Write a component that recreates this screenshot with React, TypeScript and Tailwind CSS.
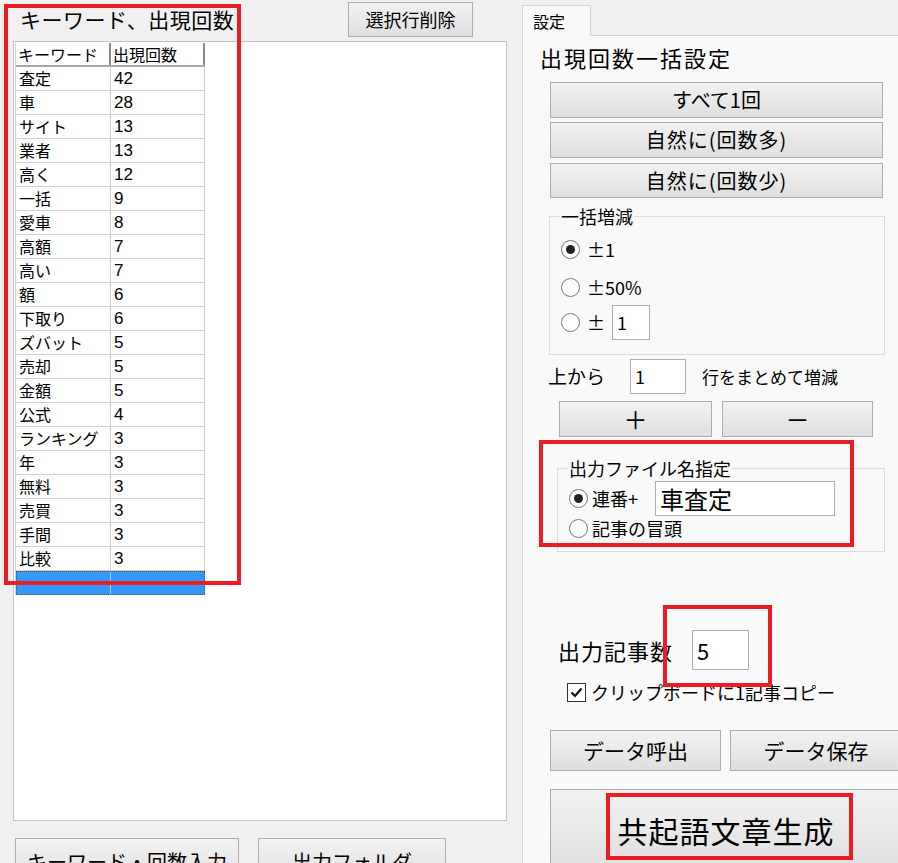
import React from 'react';

const keywords: [string, number][] = [
  ['査定', 42],
  ['車', 28],
  ['サイト', 13],
  ['業者', 13],
  ['高く', 12],
  ['一括', 9],
  ['愛車', 8],
  ['高額', 7],
  ['高い', 7],
  ['額', 6],
  ['下取り', 6],
  ['ズバット', 5],
  ['売却', 5],
  ['金額', 5],
  ['公式', 4],
  ['ランキング', 3],
  ['年', 3],
  ['無料', 3],
  ['売買', 3],
  ['手間', 3],
  ['比較', 3],
];

const btn =
  'flex shrink-0 items-center justify-center border border-[#adadad] bg-linear-to-b from-[#f2f2f2] to-[#dfdfdf] text-black';

const Radio: React.FC<{ checked?: boolean }> = ({ checked }) => (
  <span className="flex h-[19px] w-[19px] shrink-0 items-center justify-center rounded-full border border-[#777] bg-white">
    {checked && <span className="h-[9px] w-[9px] rounded-full bg-[#222]" />}
  </span>
);

const TextBox: React.FC<{ className?: string; text: string; textClass?: string }> = ({ className, text, textClass }) => (
  <div className={`flex shrink-0 items-center border border-[#adadad] bg-white pl-[4px] ${className ?? ''}`}>
    <span className={textClass ?? 'text-[18px]'}>{text}</span>
  </div>
);

const KeywordGrid: React.FC = () => (
  <div className="ml-[1px] mt-[1px] w-[190px] border-l border-[#d0d0d0] text-[16px] leading-[23px]">
    <div className="flex h-[24px] border-b-2 border-[#a8a8a8] bg-white">
      <div className="w-[95px] border-r-2 border-[#8a8a8a] pl-[2px]">キーワード</div>
      <div className="w-[94px] border-r-2 border-[#8a8a8a] pl-[2px]">出現回数</div>
    </div>
    {keywords.map(([word, count]) => (
      <div key={word} className="flex h-[24px] border-b border-[#d0d0d0] bg-white">
        <div className="w-[95px] border-r border-[#d0d0d0] pl-[3px]">{word}</div>
        <div className="w-[94px] border-r border-[#d0d0d0] pl-[3px] font-['Liberation_Sans',sans-serif] text-[17px]">{count}</div>
      </div>
    ))}
    <div className="flex h-[24px] border border-dotted border-[#6b4a10] bg-[#3399ff]">
      <div className="w-[94px] border-r border-[#9fc9f5]" />
      <div className="w-[94px]" />
    </div>
  </div>
);

const LeftPane: React.FC = () => (
  <div className="flex w-[522px] shrink-0 flex-col">
    <div className="flex h-[41px] shrink-0 items-start">
      <div className="w-[348px] pl-[20px] pt-[3px] text-[21px] leading-[32px] tracking-[0.5px]">キーワード、出現回数</div>
      <button className={`${btn} mt-[2px] h-[35px] w-[125px] text-[18px]`}>選択行削除</button>
    </div>
    <div className="ml-[13px] h-[780px] w-[494px] shrink-0 border border-[#c4c4c4] bg-white">
      <KeywordGrid />
    </div>
    <div className="mt-[17px] flex shrink-0">
      <button className={`${btn} ml-[15px] h-[48px] w-[224px] text-[20px]`}>キーワード・回数入力</button>
      <button className={`${btn} ml-[19px] h-[48px] w-[188px] text-[20px]`}>出力フォルダ</button>
    </div>
  </div>
);

const RightPane: React.FC = () => (
  <div className="flex min-w-0 flex-1 flex-col pt-[5px]">
    <div className="z-10 -mb-px flex h-[31px] w-[69px] shrink-0 items-center border border-b-0 border-[#d4d4d4] bg-[#f9f9f9] pl-[10px] text-[16px]">
      設定
    </div>
    <div className="flex flex-1 flex-col border-l border-t border-[#d4d4d4] bg-[#f9f9f9]">
      <div className="ml-[17px] mt-[4px] h-[34px] shrink-0 text-[22px] leading-[34px] tracking-[2px]">出現回数一括設定</div>

      <button className={`${btn} ml-[27px] mt-[8px] h-[36px] w-[333px] text-[20px]`}>すべて1回</button>
      <button className={`${btn} ml-[27px] mt-[4px] h-[36px] w-[333px] text-[20px] tracking-[1px]`}>自然に(回数多)</button>
      <button className={`${btn} ml-[27px] mt-[5px] h-[35px] w-[333px] text-[20px] tracking-[1px]`}>自然に(回数少)</button>

      <fieldset className="ml-[26px] mt-[7px] w-[336px] shrink-0 border border-[#dcdcdc] pb-[14px]">
        <legend className="ml-[10px] px-[1px] text-[18px] leading-[22px]">一括増減</legend>
        <div className="ml-[11px] mt-[10px] flex h-[24px] items-center gap-[7px]">
          <Radio checked />
          <span className="text-[18px]">±1</span>
        </div>
        <div className="ml-[11px] mt-[14px] flex h-[24px] items-center gap-[7px]">
          <Radio />
          <span className="text-[18px]">±50%</span>
        </div>
        <div className="ml-[11px] mt-[6px] flex h-[35px] items-center">
          <Radio />
          <span className="ml-[7px] w-[25px] text-[18px]">±</span>
          <TextBox className="h-[35px] w-[38px]" text="1" />
        </div>
      </fieldset>

      <div className="ml-[25px] mt-[4px] flex h-[35px] shrink-0 items-center">
        <span className="w-[82px] text-[19px]">上から</span>
        <TextBox className="h-[35px] w-[56px]" text="1" />
        <span className="ml-[16px] text-[17px]">行をまとめて増減</span>
      </div>

      <div className="ml-[36px] mt-[7px] flex shrink-0 gap-[10px]">
        <button className={`${btn} h-[36px] w-[153px] text-[24px]`}>＋</button>
        <button className={`${btn} h-[36px] w-[151px] text-[24px]`}>－</button>
      </div>

      <fieldset className="ml-[34px] mt-[20px] w-[328px] shrink-0 border border-[#dcdcdc] pb-[11px]">
        <legend className="ml-[10px] px-[1px] text-[18px] leading-[22px]">出力ファイル名指定</legend>
        <div className="ml-[11px] mt-[2px] flex h-[35px] items-center">
          <Radio checked />
          <span className="ml-[4px] w-[63px] text-[18px]">連番+</span>
          <TextBox className="h-[35px] w-[180px]" text="車査定" textClass="text-[24px] leading-[30px]" />
        </div>
        <div className="ml-[11px] flex h-[24px] items-center gap-[4px]">
          <Radio />
          <span className="text-[18px]">記事の冒頭</span>
        </div>
      </fieldset>

      <div className="ml-[35px] mt-[78px] flex h-[40px] shrink-0 items-center">
        <span className="w-[134px] text-[22px] tracking-[1px]">出力記事数</span>
        <TextBox className="h-[40px] w-[57px]" text="5" textClass="text-[22px]" />
      </div>

      <div className="ml-[44px] mt-[12px] flex h-[20px] shrink-0 items-center gap-[5px]">
        <span className="flex h-[19px] w-[19px] items-center justify-center border border-[#333] bg-white">
          <svg width="13" height="11" viewBox="0 0 13 11">
            <path d="M1.5 5.5 L5 9 L11.5 1.5" fill="none" stroke="#111" strokeWidth="2.2" />
          </svg>
        </span>
        <span className="text-[18px]">クリップボードに1記事コピー</span>
      </div>

      <div className="ml-[27px] mt-[28px] flex shrink-0 gap-[9px]">
        <button className={`${btn} h-[41px] w-[171px] text-[21px]`}>データ呼出</button>
        <button className={`${btn} h-[41px] w-[172px] text-[21px]`}>データ保存</button>
      </div>

      <button className={`${btn} ml-[27px] mt-[18px] h-[82px] w-[352px] text-[30px] tracking-[1px]`}>共起語文章生成</button>
    </div>
  </div>
);

export default function App() {
  return (
    <div className="relative flex h-[863px] w-[898px] overflow-hidden bg-[#f0f0f0] font-['Noto_Sans_CJK_JP',sans-serif] text-black">
      <LeftPane />
      <RightPane />

      {/* red highlight frames */}
      <div className="pointer-events-none absolute left-[4px] top-[4px] h-[581px] w-[237px] border-4 border-[#ed1c24]" />
      <div className="pointer-events-none absolute left-[539px] top-[440px] h-[107px] w-[315px] border-4 border-[#ed1c24]" />
      <div className="pointer-events-none absolute left-[663px] top-[605px] h-[82px] w-[109px] border-4 border-[#ed1c24]" />
      <div className="pointer-events-none absolute left-[606px] top-[793px] h-[67px] w-[247px] border-4 border-[#ed1c24]" />
    </div>
  );
}
